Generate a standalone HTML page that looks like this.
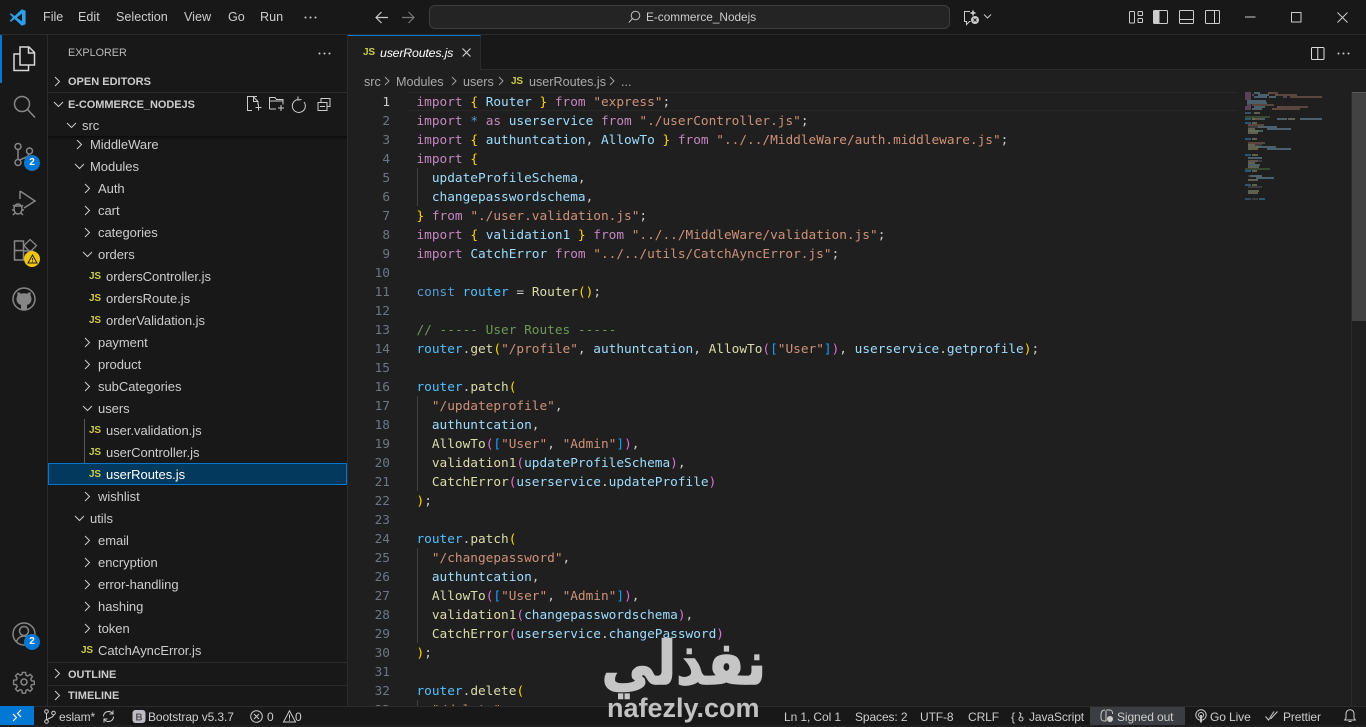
<!DOCTYPE html>
<html lang="en"><head><meta charset="utf-8"><title>userRoutes.js - E-commerce_Nodejs</title>
<style>
*{box-sizing:border-box}
html,body{margin:0;padding:0;width:1366px;height:725px;overflow:hidden;background:#1f1f1f;font-family:"Liberation Sans",sans-serif;color:#ccc}
.a{position:absolute;white-space:nowrap}
pre.a{white-space:pre}
svg{position:absolute;overflow:visible}
.ic{fill:none;stroke:#ccc;stroke-width:1}
.gi{fill:none;stroke:#868686;stroke-width:1.5}
#title{left:0;top:0;width:1366px;height:35px;background:#181818;border-bottom:1px solid #2b2b2b}
.m{font-size:12.6px;top:10px;color:#ccc;line-height:15px}
#act{left:0;top:35px;width:48px;height:671px;background:#181818;border-right:1px solid #2b2b2b}
#side{left:48px;top:35px;width:300px;height:671px;background:#181818;border-right:1px solid #2b2b2b}
#tabs{left:348px;top:35px;width:1018px;height:35px;background:#181818;border-bottom:1px solid #2b2b2b}
#tab{left:348px;top:35px;width:133px;height:35px;background:#1f1f1f;border-top:1px solid #0078d4;border-right:1px solid #2b2b2b}
.r{font-size:13px;line-height:22px;height:22px;color:#ccc;letter-spacing:-.03px;margin-top:1px}
.h{font-size:11px;font-weight:bold;line-height:22px;height:22px;color:#ccc;margin-top:1px}
.js{font-family:"Liberation Sans",sans-serif;font-size:10px;font-weight:bold;color:#cbcb41;line-height:22px;height:22px;letter-spacing:-.2px;margin-top:1px}
pre{margin:0;font-family:"DejaVu Sans Mono","Liberation Mono",monospace;font-size:12.78px;line-height:19px}
#code{left:416.5px;top:93px;color:#ccc;height:613px;overflow:hidden}
#nums{left:360px;top:93px;width:30px;text-align:right;color:#6e7681;height:613px;overflow:hidden}
i{font-style:normal}
.k{color:#c586c0}.v{color:#9cdcfe}.c{color:#4fc1ff}.f{color:#dcdcaa}.s{color:#ce9178}.o{color:#6a9955}.g{color:#ffd700}.p{color:#da70d6}.b{color:#179fff}.t{color:#569cd6}
.st{font-size:12px;line-height:19px;top:708px;color:#ccc;letter-spacing:-.1px}
.bc{font-size:12.6px;line-height:22px;top:71px;color:#a9a9a9}
.badge{width:16px;height:16px;border-radius:8px;background:#0078d4;color:#fff;font-size:10px;font-weight:bold;text-align:center;line-height:16px}
</style></head><body>

<div class="a" id="title"></div>
<svg style="left:9px;top:9px" width="18" height="17" viewBox="0 0 18 17"><path d="M12.8.2 5.6 7 2 4.3.6 5l3.3 3.5L.6 12l1.4.7 3.6-2.7 7.2 6.8 3.8-1.600V1.800zM13 4.600v7.800L7.800 8.500z" fill="#2b9fe8"/></svg>
<div class="a m" style="left:43px">File</div>
<div class="a m" style="left:78px">Edit</div>
<div class="a m" style="left:116px">Selection</div>
<div class="a m" style="left:184px">View</div>
<div class="a m" style="left:228px">Go</div>
<div class="a m" style="left:260px">Run</div>
<svg style="left:304px;top:16px" width="14" height="3"><circle cx="1.500" cy="1.500" r="1" fill="#ccc"/><circle cx="6.500" cy="1.500" r="1" fill="#ccc"/><circle cx="11.500" cy="1.500" r="1" fill="#ccc"/></svg>
<svg class="ic" style="left:375px;top:11px" width="14" height="13"><path d="M13 6.500H1M6.500 1 1 6.500 6.500 12" stroke-width="1.200"/></svg>
<svg class="ic" style="left:402px;top:11px;stroke:#777" width="14" height="13"><path d="M0 6.500h12M6.500 1 12 6.500 6.500 12" stroke-width="1.200"/></svg>
<div class="a" style="left:429px;top:5px;width:521px;height:24px;background:#242424;border:1px solid #3e3e3e;border-radius:6px"></div>
<svg class="ic" style="left:628px;top:10px" width="14" height="14"><circle cx="7.500" cy="5.500" r="4.300" stroke="#bbb"/><path d="M4.500 8.500 .8 12.600" stroke="#bbb"/></svg>
<div class="a m" style="left:646px;top:10px;font-size:11.800px;color:#ccc">E-commerce_Nodejs</div>
<svg class="ic" style="left:964px;top:9px" width="28" height="17"><path d="M6 2.500H.5v10h2v3l3-3h1"/><path d="M9 .5l1 2.500 2.500 1-2.500 1-1 2.500-1-2.500-2.500-1 2.500-1z" fill="#ccc" stroke="none"/><circle cx="11" cy="11" r="4" fill="#ccc" stroke="none"/><path d="M9.500 9.500l3 3M12.500 9.500l-3 3" stroke="#222"/><path d="M20 5.500l3.500 3.500L27 5.500"/></svg>
<svg class="ic" style="left:1128px;top:10px" width="16" height="14"><rect x="1.500" y="1.500" width="5" height="11.500" rx=".8"/><rect x="10" y="1.500" width="4.500" height="4" rx=".8"/><rect x="10" y="8.500" width="4.500" height="4" rx=".8"/></svg>
<svg class="ic" style="left:1153px;top:10px" width="16" height="14"><rect x=".5" y=".5" width="14" height="13" rx="1"/><rect x="1" y="1" width="5.500" height="12" fill="#ccc" stroke="none"/></svg>
<svg class="ic" style="left:1179px;top:10px" width="16" height="14"><rect x=".5" y=".5" width="14" height="13" rx="1"/><path d="M1 9.500h13"/></svg>
<svg class="ic" style="left:1205px;top:10px" width="16" height="14"><rect x=".5" y=".5" width="14" height="13" rx="1"/><path d="M9.500 1v12"/></svg>
<svg class="ic" style="left:1245px;top:16px" width="11" height="2"><path d="M0 1h10.500"/></svg>
<svg class="ic" style="left:1291px;top:12px" width="11" height="11"><rect x=".5" y=".5" width="9.500" height="9.500"/></svg>
<svg class="ic" style="left:1337px;top:12px" width="11" height="11"><path d="M.5.500l10 10M10.500.500l-10 10"/></svg>

<div class="a" id="act"></div>
<div class="a" style="left:0;top:35px;width:2px;height:48px;background:#0078d4"></div>
<svg class="ic" style="left:12px;top:46px;stroke:#d7d7d7;stroke-width:1.500" width="24" height="26"><path d="M8 1h9l5.500 5.500V19H8zM16.500 1v6h6M8 8H2v16.500h14.500V19"/></svg>
<svg class="gi" style="left:12px;top:95px" width="24" height="24"><circle cx="10" cy="9" r="7.500"/><path d="M15.500 14.500 23 22.500"/></svg>
<svg class="gi" style="left:13px;top:142px" width="24" height="26"><circle cx="5" cy="4.500" r="3"/><circle cx="5" cy="20.500" r="3"/><circle cx="16.500" cy="9" r="3"/><path d="M5 7.500v10M16 12c-.5 3-4 3.500-9.500 6"/></svg>
<div class="a badge" style="left:24px;top:155px">2</div>
<svg class="gi" style="left:12px;top:190px" width="26" height="28"><path d="M8 1l15 10-11 7M8 1v8"/><ellipse cx="6" cy="19" rx="4" ry="5"/><path d="M1 15l2 2M11 15l-2 2M0 20h2M10 20h2M1 25l2-2M11 25l-2-2M2 16h8"/></svg>
<svg class="gi" style="left:14px;top:240px" width="24" height="24"><path d="M.5 1h9v19h-9zM.5 10.500h9M9.500 11h9v9"/><path d="M16 -.5l6.500 6-6.500 6.500-6-6.500z" stroke-width="1.300"/></svg>
<div class="a badge" style="left:24px;top:251px;background:#f1c40f;color:#111"></div>
<svg style="left:27px;top:254px" width="11" height="10"><path d="M5.500 1 10 9H1z" fill="none" stroke="#222" stroke-width="1"/><path d="M5.500 4v2.500M5.500 7.300v.8" stroke="#222" stroke-width=".9"/></svg>
<svg class="gi" style="left:12px;top:287px" width="24" height="24"><circle cx="12" cy="12" r="11"/><path d="M9 22.500v-4.500c-3-1-4.500-3-4.500-6 0-1.500.5-2.500 1-3.500-.3-1.200-.2-2.300.2-3.200 1.200 0 2.300.6 3.300 1.400a10 10 0 0 1 6 0c1-.8 2.100-1.400 3.300-1.400.4.900.5 2 .2 3.200.5 1 1 2 1 3.500 0 3-1.500 5-4.500 6v4.500z" fill="#868686" stroke="none"/></svg>
<svg class="gi" style="left:12px;top:622px" width="24" height="24"><circle cx="12" cy="12" r="11"/><circle cx="12" cy="9" r="4.500"/><path d="M4.500 19.500c1.500-4 4-5.500 7.500-5.500s6 1.500 7.500 5.500"/></svg>
<div class="a badge" style="left:24px;top:634px">2</div>
<svg class="gi" style="left:13px;top:671px" width="22" height="22"><circle cx="11" cy="11" r="3"/><path d="M9.300 1h3.400l.5 3 1.800.8 2.500-1.800 2.400 2.400-1.800 2.500.8 1.800 3 .5v3.400l-3 .5-.8 1.800 1.800 2.500-2.400 2.400-2.500-1.800-1.800.8-.5 3H9.300l-.5-3-1.800-.8-2.500 1.800-2.400-2.400 1.800-2.500-.8-1.800-3-.5V9.300l3-.5.8-1.800-1.800-2.500 2.400-2.400 2.500 1.800 1.800-.8z" transform="translate(.5 .5) scale(.95)"/></svg>

<div class="a" id="side"></div>
<div class="a" style="left:68px;top:46px;font-size:10.800px;line-height:14px;color:#bbb">EXPLORER</div>
<svg style="left:318px;top:52px" width="14" height="3"><circle cx="1.500" cy="1.500" r="1" fill="#ccc"/><circle cx="6.500" cy="1.500" r="1" fill="#ccc"/><circle cx="11.500" cy="1.500" r="1" fill="#ccc"/></svg>

<svg class="ic" style="left:0;top:0;position:absolute" width="348" height="706"><path d="M55 77l4.500 4.500L55 86M54 102l4.500 4.500 4.500-4.500M67 123l4.500 4.500 4.500-4.500M77 140l4.500 4.500L77 149M75 164l4.500 4.500 4.500-4.500M85 184l4.500 4.500L85 193M85 206l4.500 4.500L85 215M85 228l4.500 4.500L85 237M83 252l4.500 4.500 4.500-4.500M85 338l4.500 4.500L85 347M85 360l4.500 4.500L85 369M85 382l4.500 4.500L85 391M83 406l4.500 4.500 4.500-4.500M85 492l4.500 4.500L85 501M75 516l4.500 4.500 4.500-4.500M85 536l4.500 4.500L85 545M85 558l4.500 4.500L85 567M85 580l4.500 4.500L85 589M85 602l4.500 4.500L85 611M85 624l4.500 4.500L85 633M55 669l4.500 4.500L55 678M55 691l4.500 4.500L55 700"/></svg>

<div class="a h" style="left:68px;top:70px">OPEN EDITORS</div>
<div class="a" style="left:48px;top:92px;width:299px;height:1px;background:#2b2b2b"></div>
<div class="a h" style="left:68px;top:93px;letter-spacing:-.05px">E-COMMERCE_NODEJS</div>
<svg class="ic" style="left:246px;top:96px" width="90" height="17"><path d="M11 .5H1.500v14H6M7 .500l5 5V9M7.500.500v5h5M9.500 11.500h6M12.500 8.500v6" stroke-width="1"/><path d="M23.500 13V1.500H29l1.500 2H37v5M23.500 5H37M23.500 13H30M32 12h6M35 9v6"/><path d="M52 3.500a6.500 6.500 0 1 0 6 2.500M52 .5v3.500l3.500-.5"/><path d="M72 6.500h9v8h-9zM75 6.500V2.500h9v8h-3M74 10.500h5"/></svg>
<div class="a r" style="left:82px;top:114px">src</div>
<div class="a" style="left:48px;top:136px;width:299px;height:4px;background:linear-gradient(#0d0d0d,#181818)"></div>
<div class="a r" style="left:90px;top:133px">MiddleWare</div>
<div class="a r" style="left:90px;top:155px">Modules</div>
<div class="a r" style="left:98px;top:177px">Auth</div>
<div class="a r" style="left:98px;top:199px">cart</div>
<div class="a r" style="left:98px;top:221px">categories</div>
<div class="a r" style="left:98px;top:243px">orders</div>
<div class="a js" style="left:89px;top:265px">JS</div><div class="a r" style="left:106px;top:265px">ordersController.js</div>
<div class="a js" style="left:89px;top:287px">JS</div><div class="a r" style="left:106px;top:287px">ordersRoute.js</div>
<div class="a js" style="left:89px;top:309px">JS</div><div class="a r" style="left:106px;top:309px">orderValidation.js</div>
<div class="a r" style="left:98px;top:331px">payment</div>
<div class="a r" style="left:98px;top:353px">product</div>
<div class="a r" style="left:98px;top:375px">subCategories</div>
<div class="a r" style="left:98px;top:397px">users</div>
<div class="a" style="left:84px;top:419px;width:1px;height:44px;background:#585858"></div>
<div class="a js" style="left:89px;top:419px">JS</div><div class="a r" style="left:106px;top:419px">user.validation.js</div>
<div class="a js" style="left:89px;top:441px">JS</div><div class="a r" style="left:106px;top:441px">userController.js</div>
<div class="a" style="left:48px;top:463px;width:299px;height:22px;background:#04395e;border:1px solid #0078d4"></div>
<div class="a js" style="left:89px;top:463px">JS</div><div class="a r" style="left:106px;top:463px;color:#fff">userRoutes.js</div>
<div class="a r" style="left:98px;top:485px">wishlist</div>
<div class="a r" style="left:90px;top:507px">utils</div>
<div class="a r" style="left:98px;top:529px">email</div>
<div class="a r" style="left:98px;top:551px">encryption</div>
<div class="a r" style="left:98px;top:573px">error-handling</div>
<div class="a r" style="left:98px;top:595px">hashing</div>
<div class="a r" style="left:98px;top:617px">token</div>
<div class="a js" style="left:81px;top:639px">JS</div><div class="a r" style="left:98px;top:639px">CatchAyncError.js</div>
<div class="a" style="left:48px;top:662px;width:299px;height:1px;background:#2b2b2b"></div>
<div class="a h" style="left:68px;top:663px">OUTLINE</div>
<div class="a" style="left:48px;top:685px;width:299px;height:1px;background:#2b2b2b"></div>
<div class="a h" style="left:68px;top:684px">TIMELINE</div>

<div class="a" id="tabs"></div>
<div class="a" id="tab"></div>
<div class="a js" style="left:363px;top:41px;color:#cbcb41">JS</div>
<div class="a" style="left:380px;top:45px;font-size:12.400px;font-style:italic;line-height:17px;color:#fff;letter-spacing:-.2px">userRoutes.js</div>
<svg class="ic" style="left:462px;top:48px" width="10" height="10"><path d="M.5.500l8 8M8.500.500l-8 8" stroke-width="1.200"/></svg>
<svg class="ic" style="left:1311px;top:47px;stroke:#ddd" width="14" height="13"><rect x=".5" y=".5" width="12.500" height="12" rx="1"/><path d="M6.800 1v11"/></svg>
<svg style="left:1337px;top:52px" width="14" height="3"><circle cx="1.500" cy="1.500" r="1" fill="#ccc"/><circle cx="6.500" cy="1.500" r="1" fill="#ccc"/><circle cx="11.500" cy="1.500" r="1" fill="#ccc"/></svg>

<div class="a bc" style="left:364px">src</div>
<div class="a bc" style="left:396px">Modules</div>
<div class="a bc" style="left:463px">users</div>
<div class="a js" style="left:511px;top:70px">JS</div>
<div class="a bc" style="left:529px">userRoutes.js</div>
<div class="a bc" style="left:621px">...</div>
<svg class="ic" style="left:0;top:0;stroke:#a0a0a0" width="630" height="92"><path d="M385 77l4 4-4 4M452 77l4 4-4 4M499 77l4 4-4 4M610 77l4 4-4 4"/></svg>

<div class="a" style="left:408px;top:92px;width:830px;height:19px;border-top:1px solid #282828;border-bottom:1px solid #282828"></div>
<pre class="a" id="nums"><i style="color:#ccc">1</i>
2
3
4
5
6
7
8
9
10
11
12
13
14
15
16
17
18
19
20
21
22
23
24
25
26
27
28
29
30
31
32
33</pre>
<div class="a" style="left:417px;top:168px;width:1px;height:38px;background:#404040"></div>
<div class="a" style="left:417px;top:396px;width:1px;height:95px;background:#404040"></div>
<div class="a" style="left:417px;top:548px;width:1px;height:95px;background:#404040"></div>
<div class="a" style="left:417px;top:700px;width:1px;height:10px;background:#404040"></div>
<pre class="a" id="code"><i class="k">import</i> <i class="g">{</i> <i class="v">Router</i> <i class="g">}</i> <i class="k">from</i> <i class="s">"express"</i>;
<i class="k">import</i> <i class="t">*</i> <i class="k">as</i> <i class="v">userservice</i> <i class="k">from</i> <i class="s">"./userController.js"</i>;
<i class="k">import</i> <i class="g">{</i> <i class="v">authuntcation</i>, <i class="v">AllowTo</i> <i class="g">}</i> <i class="k">from</i> <i class="s">"../../MiddleWare/auth.middleware.js"</i>;
<i class="k">import</i> <i class="g">{</i>
  <i class="v">updateProfileSchema</i>,
  <i class="v">changepasswordschema</i>,
<i class="g">}</i> <i class="k">from</i> <i class="s">"./user.validation.js"</i>;
<i class="k">import</i> <i class="g">{</i> <i class="v">validation1</i> <i class="g">}</i> <i class="k">from</i> <i class="s">"../../MiddleWare/validation.js"</i>;
<i class="k">import</i> <i class="v">CatchError</i> <i class="k">from</i> <i class="s">"../../utils/CatchAyncError.js"</i>;

<i class="t">const</i> <i class="c">router</i> = <i class="f">Router</i><i class="g">()</i>;

<i class="o">// ----- User Routes -----</i>
<i class="c">router</i>.<i class="f">get</i><i class="g">(</i><i class="s">"/profile"</i>, <i class="v">authuntcation</i>, <i class="f">AllowTo</i><i class="p">(</i><i class="b">[</i><i class="s">"User"</i><i class="b">]</i><i class="p">)</i>, <i class="v">userservice</i>.<i class="v">getprofile</i><i class="g">)</i>;

<i class="c">router</i>.<i class="f">patch</i><i class="g">(</i>
  <i class="s">"/updateprofile"</i>,
  <i class="v">authuntcation</i>,
  <i class="f">AllowTo</i><i class="p">(</i><i class="b">[</i><i class="s">"User"</i>, <i class="s">"Admin"</i><i class="b">]</i><i class="p">)</i>,
  <i class="f">validation1</i><i class="p">(</i><i class="v">updateProfileSchema</i><i class="p">)</i>,
  <i class="f">CatchError</i><i class="p">(</i><i class="v">userservice</i>.<i class="v">updateProfile</i><i class="p">)</i>
<i class="g">)</i>;

<i class="c">router</i>.<i class="f">patch</i><i class="g">(</i>
  <i class="s">"/changepassword"</i>,
  <i class="v">authuntcation</i>,
  <i class="f">AllowTo</i><i class="p">(</i><i class="b">[</i><i class="s">"User"</i>, <i class="s">"Admin"</i><i class="b">]</i><i class="p">)</i>,
  <i class="f">validation1</i><i class="p">(</i><i class="v">changepasswordschema</i><i class="p">)</i>,
  <i class="f">CatchError</i><i class="p">(</i><i class="v">userservice</i>.<i class="v">changePassword</i><i class="p">)</i>
<i class="g">)</i>;

<i class="c">router</i>.<i class="f">delete</i><i class="g">(</i>
  <i class="s">"/delete"</i>,</pre>

<svg style="left:0;top:0" width="1366" height="725" fill="none" stroke-width="1.200" opacity=".55">
<path stroke="#c586c0" d="M1245 93h6M1245 95h6M1245 97h6M1245 99h6M1245 107h6M1245 109h6M1268 93h4M1252 95h2M1275 95h4M1283 97h4M1247 105h4M1277 107h4M1272 109h4"/>
<path stroke="#9cdcfe" d="M1254 93h6M1258 95h11M1254 97h13M1269 97h7M1247 101h19M1247 103h20M1254 107h11M1252 109h10M1277 119h10M1252 119h13M1300 119h11M1311 119h11M1248 131h15M1258 127h19M1267 129h24M1248 158h14M1256 147h20M1267 149h24M1250 176h12M1256 178h18M1248 165h12"/>
<path stroke="#ce9178" d="M1268 93h10M1275 95h22M1290 97h32M1252 105h22M1277 107h31M1272 109h28M1252 119h9M1248 125h16M1248 143h17M1248 161h10"/>
<path stroke="#4fc1ff" d="M1245 113h6M1245 119h6M1245 123h6M1245 139h6M1245 155h6M1245 171h6M1245 185h6M1259 199h6"/>
<path stroke="#dcdcaa" d="M1254 113h6M1252 119h3M1288 119h7M1252 123h5M1252 139h5M1252 155h6M1252 171h5M1252 185h5M1248 129h7M1248 145h7M1248 163h7M1248 131h11M1248 133h10M1248 147h11M1248 149h10M1248 167h11M1248 180h10M1248 191h11M1248 193h10"/>
<path stroke="#6a9955" d="M1245 117h25M1245 169h25"/>
<path stroke="#569cd6" d="M1245 113h5M1245 199h6"/>
<path stroke="#c8c8c8" stroke-opacity=".5" d="M1248 127h14M1248 145h14M1248 161h14M1248 176h14M1248 187h14M1252 199h6"/>
</svg>
<div class="a" style="left:1352px;top:92px;width:14px;height:229px;background:#424242;border-top:1px solid #5a5a5a"></div>
<div class="a" style="left:1351px;top:92px;width:1px;height:614px;background:#2b2b2b"></div>

<div class="a" style="left:0;top:706px;width:1366px;height:19px;background:#181818;border-top:1px solid #2b2b2b"></div>
<div class="a" style="left:0;top:706px;width:34px;height:19px;background:#0078d4"></div>
<svg class="ic" style="left:11px;top:709px;stroke:#fff;stroke-width:1.200" width="14" height="13"><path d="M10 1 6.500 4.500 10 8M2 5l3.500 3.500L2 12"/></svg>
<svg class="ic" style="left:44px;top:709px" width="12" height="15"><circle cx="2.500" cy="2.500" r="1.800"/><circle cx="2.500" cy="12.500" r="1.800"/><circle cx="9.500" cy="4" r="1.800"/><path d="M2.500 4.500v6M9.500 6c0 3-5 2.500-6.500 5"/></svg>
<div class="a st" style="left:59px">eslam*</div>
<svg class="ic" style="left:102px;top:710px" width="13" height="13"><path d="M1.500 6.500a5 5 0 0 1 9-3M11.500 6.500a5 5 0 0 1-9 3M11 .5v3.500H7.500M2 12.500V9h3.500"/></svg>
<svg style="left:132px;top:710px" width="14" height="13"><rect x=".5" y="0" width="13" height="13" rx="3" fill="#c0bcc4"/><text x="7" y="10.500" text-anchor="middle" font-family="Liberation Sans" font-weight="bold" font-size="10" fill="#555">B</text></svg>
<div class="a st" style="left:148px">Bootstrap v5.3.7</div>
<svg class="ic" style="left:250px;top:710px" width="13" height="13"><circle cx="6.500" cy="6.500" r="5.800"/><path d="M4 4l5 5M9 4 4 9"/></svg>
<div class="a st" style="left:267px">0</div>
<svg class="ic" style="left:283px;top:710px" width="13" height="13"><path d="M6.500.8 12.500 12H.5zM6.500 4.500v4M6.500 9.500v1.200"/></svg>
<div class="a st" style="left:295px">0</div>
<div class="a st" style="left:784px">Ln 1, Col 1</div>
<div class="a st" style="left:855px">Spaces: 2</div>
<div class="a st" style="left:920px">UTF-8</div>
<div class="a st" style="left:968px">CRLF</div>
<div class="a st" style="left:1011px">{</div>
<svg class="ic" style="left:1017px;top:712px" width="8" height="10"><path d="M2 .5l2 1-1 3"/><circle cx="4" cy="7" r="2"/></svg>
<div class="a st" style="left:1029px">JavaScript</div>
<div class="a" style="left:1090px;top:707px;width:95px;height:18px;background:#3a3d41"></div>
<svg class="ic" style="left:1100px;top:709px" width="14" height="14"><path d="M5 1C2 1 1 3 1 6v3c0 2 1.500 3 3 3h2V1.500M6.500 1h3c2 0 3 1.500 3 3v1"/><circle cx="10" cy="10" r="3" fill="#ccc" stroke="none"/></svg>
<div class="a st" style="left:1117px">Signed out</div>
<svg class="ic" style="left:1195px;top:709px" width="12" height="14"><circle cx="6" cy="6" r="5.200"/><circle cx="6" cy="6" r="2.500"/><path d="M6 6v7.500" stroke-width="1.800"/></svg>
<div class="a st" style="left:1210px">Go Live</div>
<svg class="ic" style="left:1265px;top:711px" width="14" height="10"><path d="M.5 5.500l3 3.500L9 .5M5.500 8 12.500.5"/></svg>
<div class="a st" style="left:1283px">Prettier</div>
<svg class="ic" style="left:1344px;top:709px" width="12" height="14"><path d="M6 .8c-2.500 0-4 1.800-4 4V9L.7 11h10.600L10 9V4.800c0-2.200-1.500-4-4-4zM4.500 12.500h3"/></svg>

<div class="a" dir="rtl" style="left:566px;top:624px;width:200px;text-align:right;font-family:'DejaVu Sans',sans-serif;font-weight:bold;font-size:60px;line-height:80px;color:#c6c6c6;-webkit-text-stroke:1.500px #c6c6c6;transform:scaleX(.895);transform-origin:right center">نفذلي</div>
<div class="a" style="left:607px;top:691px;font-family:'Liberation Sans',sans-serif;font-weight:bold;font-size:27px;line-height:34px;color:#c2c2c2;height:34px;overflow:hidden">nafezly.com</div>

</body></html>
